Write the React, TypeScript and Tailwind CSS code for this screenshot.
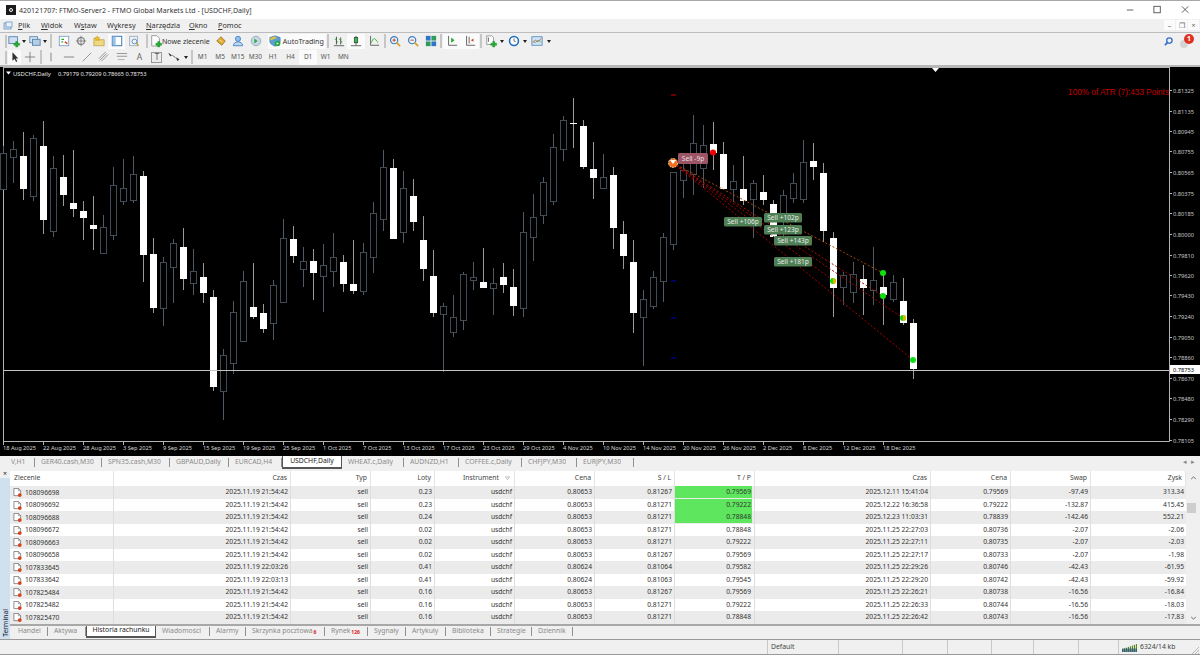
import type { ReactNode } from "react";

// x, wick top, body top, body bottom, wick bottom, white body?
type Candle = [number, number, number, number, number, boolean];

const CANDLES: Candle[] = [
  [4, 146, 153, 189, 189, false], [14, 141, 149, 157, 183, false], [24, 132, 156, 189, 200, true],
  [34, 135, 138, 196, 201, false], [44, 121, 146, 220, 234, true], [54, 156, 168, 231, 237, false],
  [64, 155, 177, 195, 206, true], [74, 150, 203, 209, 217, true], [84, 201, 211, 218, 240, true],
  [94, 196, 225, 229, 250, true], [104, 215, 227, 253, 253, false], [114, 167, 185, 235, 240, false],
  [124, 159, 188, 201, 205, false], [134, 156, 174, 200, 203, false], [144, 171, 176, 255, 282, true],
  [154, 238, 254, 308, 313, true], [164, 257, 262, 308, 326, false], [174, 239, 243, 267, 303, false],
  [184, 228, 247, 279, 290, true], [194, 249, 271, 283, 295, false], [204, 263, 277, 293, 303, true],
  [214, 290, 297, 387, 391, true], [224, 349, 355, 391, 420, false], [234, 301, 312, 363, 374, false],
  [244, 271, 281, 341, 342, false], [254, 263, 307, 317, 319, true], [264, 304, 313, 329, 333, true],
  [274, 280, 285, 323, 340, false], [284, 219, 238, 302, 302, false], [294, 226, 239, 256, 263, true],
  [304, 247, 261, 269, 287, false], [314, 249, 261, 273, 300, true], [324, 244, 265, 276, 312, false],
  [334, 233, 257, 271, 287, false], [344, 255, 262, 284, 292, true], [354, 240, 284, 291, 294, true],
  [364, 243, 252, 291, 295, false], [374, 202, 213, 257, 273, false], [384, 150, 167, 219, 231, false],
  [394, 159, 168, 239, 239, true], [404, 171, 188, 232, 243, false], [414, 179, 196, 222, 231, true],
  [424, 216, 240, 269, 281, true], [434, 250, 276, 313, 317, true], [444, 303, 306, 314, 372, false],
  [454, 295, 317, 332, 337, false], [464, 272, 274, 320, 330, false], [474, 262, 277, 280, 290, false],
  [484, 248, 282, 288, 288, true], [494, 268, 283, 288, 315, false], [504, 263, 277, 285, 293, true],
  [514, 269, 287, 306, 316, true], [524, 212, 232, 308, 317, false], [534, 194, 217, 237, 261, false],
  [544, 177, 182, 215, 224, false], [554, 134, 147, 201, 205, false], [564, 116, 120, 149, 161, false],
  [574, 98, 123, 124, 148, true], [584, 120, 126, 167, 169, true], [594, 142, 169, 178, 199, true],
  [604, 154, 177, 188, 188, false], [614, 167, 175, 228, 249, true], [624, 221, 234, 256, 269, true],
  [634, 240, 262, 313, 333, true], [644, 290, 299, 317, 366, false], [654, 271, 277, 306, 309, false],
  [664, 233, 237, 281, 302, false], [674, 172, 172, 244, 250, false], [684, 163, 170, 180, 198, false],
  [694, 115, 143, 174, 195, false], [704, 125, 145, 168, 188, false], [714, 122, 144, 153, 170, true],
  [724, 142, 154, 189, 189, true], [734, 165, 181, 189, 202, false], [744, 156, 189, 201, 205, true],
  [754, 180, 183, 199, 238, false], [764, 175, 192, 200, 205, true], [774, 200, 204, 237, 237, true],
  [784, 190, 195, 218, 236, false], [794, 173, 183, 198, 203, false], [804, 140, 162, 199, 203, false],
  [814, 143, 161, 167, 180, true], [824, 163, 173, 231, 242, true], [834, 232, 238, 288, 317, true],
  [844, 272, 275, 287, 305, false], [854, 262, 274, 292, 303, false], [864, 265, 279, 288, 315, true],
  [874, 247, 280, 290, 305, false], [884, 273, 287, 295, 325, true], [894, 275, 282, 299, 302, false],
  [904, 278, 301, 323, 325, true], [914, 319, 323, 369, 379, true],
];

const PRICES: [string, number][] = [
  ["0.81325", 90], ["0.81135", 111], ["0.80945", 131], ["0.80755", 151], ["0.80565", 172],
  ["0.80375", 193], ["0.80185", 213], ["0.80000", 234], ["0.79810", 255], ["0.79620", 275],
  ["0.79430", 295], ["0.79240", 316], ["0.79050", 337], ["0.78860", 357], ["0.78670", 378],
  ["0.78480", 398], ["0.78290", 419], ["0.78105", 440],
];

const DATES = [
  "18 Aug 2025", "22 Aug 2025", "28 Aug 2025", "3 Sep 2025", "9 Sep 2025", "15 Sep 2025",
  "19 Sep 2025", "25 Sep 2025", "1 Oct 2025", "7 Oct 2025", "13 Oct 2025", "17 Oct 2025",
  "23 Oct 2025", "29 Oct 2025", "4 Nov 2025", "10 Nov 2025", "14 Nov 2025", "20 Nov 2025",
  "26 Nov 2025", "2 Dec 2025", "8 Dec 2025", "12 Dec 2025", "18 Dec 2025",
];

const SELL_LABELS: [string, number, number][] = [
  ["Sell +102p", 764, 213], ["Sell +106p", 724, 217], ["Sell +123p", 764, 225],
  ["Sell +143p", 774, 236], ["Sell +181p", 774, 257],
];

const TRADE_LINES: [number, number, string][] = [
  [883, 273, "#a84400"], [883, 296, "#a81000"], [834, 281, "#a80000"], [903, 318, "#a80000"], [913, 360, "#a80000"],
];

const CHART_TABS: [string, number][] = [
  ["V,H1", 30], ["GER40.cash,M30", 67], ["SPN35.cash,M30", 68], ["GBPAUD,Daily", 59], ["EURCAD,H4", 53],
];
const CHART_TABS_AFTER: [string, number][] = [
  ["WHEAT.c,Daily", 62], ["AUDNZD,H1", 55], ["COFFEE.c,Daily", 63], ["CHFJPY,M30", 55], ["EURJPY,M30", 57],
];

const TERMINAL_TABS_BEFORE: [string, number][] = [["Handel", 36], ["Aktywa", 38]];
const TERMINAL_TABS_AFTER: [string, number, string?][] = [
  ["Wiadomości", 54], ["Alarmy", 36], ["Skrzynka pocztowa", 79, "6"], ["Rynek", 43, "126"],
  ["Sygnały", 38], ["Artykuły", 40], ["Biblioteka", 45], ["Strategie", 41], ["Dziennik", 41],
];

const TIME_A = "2025.11.19 21:54:42";

const ROWS: string[][] = [
  ["108096698", TIME_A, "0.23", "0.80653", "0.81267", "0.79569", "2025.12.11 15:41:04", "0.79569", "-97.49", "313.34"],
  ["108096692", TIME_A, "0.23", "0.80653", "0.81271", "0.79222", "2025.12.22 16:36:58", "0.79222", "-132.87", "415.45"],
  ["108096688", TIME_A, "0.24", "0.80653", "0.81271", "0.78848", "2025.12.23 11:03:31", "0.78839", "-142.46", "552.21"],
  ["108096672", TIME_A, "0.02", "0.80653", "0.81271", "0.78848", "2025.11.25 22:27:03", "0.80736", "-2.07", "-2.06"],
  ["108096663", TIME_A, "0.02", "0.80653", "0.81271", "0.79222", "2025.11.25 22:27:11", "0.80735", "-2.07", "-2.03"],
  ["108096658", TIME_A, "0.02", "0.80653", "0.81267", "0.79569", "2025.11.25 22:27:17", "0.80733", "-2.07", "-1.98"],
  ["107833645", "2025.11.19 22:03:26", "0.41", "0.80624", "0.81064", "0.79582", "2025.11.25 22:29:26", "0.80746", "-42.43", "-61.95"],
  ["107833642", "2025.11.19 22:03:13", "0.41", "0.80624", "0.81063", "0.79545", "2025.11.25 22:29:20", "0.80742", "-42.43", "-59.92"],
  ["107825484", TIME_A, "0.16", "0.80653", "0.81267", "0.79569", "2025.11.25 22:26:21", "0.80738", "-16.56", "-16.84"],
  ["107825482", TIME_A, "0.16", "0.80653", "0.81271", "0.79222", "2025.11.25 22:26:33", "0.80744", "-16.56", "-18.03"],
  ["107825470", TIME_A, "0.16", "0.80653", "0.81271", "0.78848", "2025.11.25 22:26:42", "0.80743", "-16.56", "-17.83"],
];

const GRID = "grid grid-cols-[104px_177px_80px_64px_80px_80px_80px_80px_176px_80px_80px_95px]";

function Icon({ children }: { children: ReactNode }) {
  return <svg viewBox="0 0 14 14" className="size-[12px] overflow-visible">{children}</svg>;
}

function Arrow() {
  return <span className="size-0 border-x-[2.5px] border-t-[3px] border-x-transparent border-t-[#222]" />;
}

function Btn({ w = 17.6, active, children }: { w?: number; active?: boolean; children: ReactNode }) {
  return (
    <div
      className={`flex h-[15px] shrink-0 items-center justify-center ${active ? "bg-[#fbfbfb]" : ""}`}
      style={{ width: w }}
    >
      {children}
    </div>
  );
}

function Sep({ tight }: { tight?: boolean }) {
  return <div className={`h-[14px] w-[2px] shrink-0 bg-[#c6c6c6] ${tight ? "mx-px" : "mx-[3px]"}`} />;
}

function TfBtn({ label, active }: { label: string; active?: boolean }) {
  return (
    <Btn active={active}>
      <span className="text-[6.5px] text-[#555]">{label}</span>
    </Btn>
  );
}

const Plus = <path d="M9 7.5h2.4v2.2h2.2v2.4h-2.2v1.9H9v-1.9H6.8v-2.4H9z" fill="#1fae2e" stroke="#0d7a1c" strokeWidth=".4" />;
const Axes = <path d="M3 1v11h10" fill="none" stroke="#555" strokeWidth="1" />;
const Lens = (
  <>
    <circle cx="6" cy="6" r="4.2" fill="#eaf4fc" stroke="#3f7fbf" strokeWidth="1.4" />
    <path d="M9 9l4 4" stroke="#d8a32c" strokeWidth="2" />
  </>
);

function Chart() {
  return (
    <svg viewBox="0 67 1200 389" className="block h-[389px] w-[1200px] shrink-0 bg-black">
      <path d="M3.5 67v374.5H1169.5V67" fill="none" stroke="#b4b4b4" strokeWidth="1" />
      <path d="M3 67.5H1170" stroke="#b4b4b4" strokeWidth="1" />
      <path d="M932 68h7l-3.5 4z" fill="#fff" />
      <path d="M6 71.5h5l-2.500 3z" fill="#fff" />
      <text x="13" y="75.500" fill="#e8e8e8" fontSize="5.9">USDCHF,Daily</text>
      <text x="58" y="75.500" fill="#e8e8e8" fontSize="5.7">0.79179 0.79209 0.78665 0.78753</text>
      <text x="1169" y="95" textAnchor="end" fill="#c40000" fontSize="8.2" fontFamily="'Liberation Sans', sans-serif">100% of ATR (7):433 Points</text>

      {CANDLES.map(([x, top, bodyTop, bodyBottom, bottom, white]) => (
        <g key={x}>
          <path d={`M${x - 0.5} ${top}V${bottom}`} stroke={white ? "#9a9a9a" : "#505a64"} strokeWidth="1" />
          {white
            ? <rect x={x - 4} y={bodyTop} width="7" height={Math.max(bodyBottom - bodyTop, 1)} fill="#fff" />
            : <rect x={x - 3.5} y={bodyTop + 0.5} width="6" height={bodyBottom - bodyTop} fill="#000" stroke="#414b56" strokeWidth="1" />}
        </g>
      ))}

      <path d="M3 370.5H1169" stroke="#c4c4c4" strokeWidth="1" />
      <path d="M671 95h5" stroke="#d00000" strokeWidth="1" />
      <path d="M671 281h5M671 318h5M671 358h5" stroke="#0000c0" strokeWidth="1" />

      {TRADE_LINES.map(([x, y, color]) => (
        <path key={`${x}-${y}`} d={`M673 163L${x} ${y}`} stroke={color} strokeWidth="1" strokeDasharray="2 2" />
      ))}

      <circle cx="673" cy="163" r="4.5" fill="#f0701c" stroke="#f0c8a0" strokeWidth="1" strokeDasharray="2 1" />
      <path d="M670 160h6l-3 4z" fill="#fff" />
      <circle cx="713" cy="152.5" r="3" fill="#f00000" />
      <circle cx="883" cy="273" r="3" fill="#10e010" />
      <circle cx="883" cy="296" r="3" fill="#10e010" />
      <circle cx="913" cy="360" r="3" fill="#10e010" />
      <circle cx="833" cy="281" r="3" fill="#10e010" />
      <path d="M833 278a3 3 0 0 1 0 6z" fill="#f0b000" />
      <circle cx="903" cy="318" r="3" fill="#10e010" />
      <path d="M903 315a3 3 0 0 1 0 6z" fill="#f0b000" />

      <rect x="678" y="153" width="30" height="11" rx="1.5" fill="#9c5564" />
      <text x="693" y="161" textAnchor="middle" fill="#eadfe0" fontSize="6.6">Sell -9p</text>
      {SELL_LABELS.map(([label, x, y]) => (
        <g key={label}>
          <rect x={x} y={y} width="38" height="9.5" rx="1.5" fill="#4f7f55" />
          <text x={x + 19} y={y + 7.3} textAnchor="middle" fill="#e6ece6" fontSize="6.6">{label}</text>
        </g>
      ))}

      {PRICES.map(([label, y]) => (
        <g key={label}>
          <path d={`M1169 ${y}.5h3`} stroke="#b4b4b4" strokeWidth="1" />
          <text x="1173" y={y + 2.5} fill="#c8c8c8" fontSize="5.7">{label}</text>
        </g>
      ))}
      <rect x="1170" y="365" width="30" height="9" fill="#fff" />
      <text x="1173" y="372" fill="#000" fontSize="5.7">0.78753</text>

      {DATES.map((label, index) => (
        <g key={label}>
          <path d={`M${3.5 + index * 40} 441v4`} stroke="#b4b4b4" strokeWidth="1" />
          <text x={3 + index * 40} y="450" fill="#d4d4d4" fontSize="5.7">{label}</text>
        </g>
      ))}
    </svg>
  );
}

function TabText({ label, width }: { label: string; width: number }) {
  return (
    <div className="flex h-[12px] shrink-0 items-center justify-between pl-[6px]" style={{ width }}>
      <span className="truncate text-[6.8px] text-[#8a8a8a]">{label}</span>
      <span className="h-[9px] w-px bg-[#909090]" />
    </div>
  );
}

function OrderIcon() {
  return (
    <svg viewBox="0 0 10 10" className="size-[9px] shrink-0">
      <path d="M1 .5h5l2.5 2.5v5.5H1z" fill="#fff" stroke="#666" strokeWidth=".8" />
      <path d="M6 .5v2.5h2.5" fill="none" stroke="#666" strokeWidth=".6" />
      <circle cx="7.5" cy="7.8" r="2.1" fill="#d9401a" />
    </svg>
  );
}

function Table() {
  const head = ["Czas", "Typ", "Loty"];
  const headTail = ["Cena", "S / L", "T / P", "Czas", "Cena", "Swap", "Zysk"];
  return (
    <div className="w-[1176px] shrink-0 pt-[2px]">
      <div className={`${GRID} h-[15px] bg-white text-[6.8px] text-[#444]`}>
        <div className="flex items-center border-r border-[#e4e4e4] pl-[4px]">Zlecenie</div>
        {head.map(label => (
          <div key={label} className="flex items-center justify-end border-r border-[#e4e4e4] pr-[3px]">{label}</div>
        ))}
        <div className="flex items-center justify-end gap-[6px] border-r border-[#e4e4e4] pr-[4px]">
          Instrument
          <svg viewBox="0 0 6 6" className="size-[5px]"><path d="M.5 1h5L3 4.5z" fill="none" stroke="#888" strokeWidth=".6" /></svg>
        </div>
        {headTail.map((label, index) => (
          <div key={`${label}-${index}`} className="flex items-center justify-end border-r border-[#e4e4e4] pr-[3px]">{label}</div>
        ))}
      </div>
      {ROWS.map((row, rowIndex) => {
        const [id, time, lots, price, sl, tp, closeTime, closePrice, swap, profit] = row;
        const cells = [time, "sell", lots, "usdchf", price, sl];
        const tail = [closeTime, closePrice, swap, profit];
        return (
          <div
            key={id}
            className={`${GRID} h-[12.5px] text-[6.7px] leading-[12px] text-[#333] ${rowIndex % 2 === 0 ? "bg-[#ebebeb]" : "bg-white"}`}
          >
            <div className="flex items-center gap-[3px] border-r border-[#dedede] pl-[3px]">
              <OrderIcon />
              {id}
            </div>
            {cells.map((value, index) => (
              <div key={index} className="border-r border-[#dedede] pr-[2px] text-right">{value}</div>
            ))}
            <div className="border-r border-[#dedede] pb-px pr-[2px]">
              <div className={`pr-px text-right ${rowIndex < 3 ? "bg-[#5ee65e]" : ""}`}>{tp}</div>
            </div>
            {tail.map((value, index) => (
              <div key={index} className={`pr-[2px] text-right ${index < 3 ? "border-r border-[#dedede]" : ""}`}>{value}</div>
            ))}
          </div>
        );
      })}
    </div>
  );
}

function Scrollbar() {
  return (
    <div className="flex w-[14px] shrink-0 flex-col items-center bg-[#f0f0f0]">
      <svg viewBox="0 0 8 5" className="mt-[7px] h-[4px] w-[7px]"><path d="M1 4l3-3 3 3" fill="none" stroke="#555" strokeWidth="1" /></svg>
      <div className="ml-[-3px] mt-[23px] h-[10px] w-[9px] bg-[#cdcdcd]" />
      <svg viewBox="0 0 8 5" className="mt-auto mb-[4px] h-[4px] w-[7px]"><path d="M1 1l3 3 3-3" fill="none" stroke="#555" strokeWidth="1" /></svg>
    </div>
  );
}

function Terminal() {
  return (
    <div className="flex h-[170px] shrink-0">
      <div className="flex w-[10px] shrink-0 flex-col items-center bg-[#cfe0ef]">
        <div className="flex h-[9px] w-full items-center justify-center bg-[#f0f0f0] text-[7px] leading-none text-[#222]">×</div>
        <span className="mt-auto mb-[2px] rotate-180 text-[6.8px] leading-[9px] text-[#223] [writing-mode:vertical-rl]">Terminal</span>
      </div>
      <div className="flex min-w-0 flex-1 flex-col">
        <div className="flex h-[156.5px] shrink-0 border-b-2 border-[#a8a8a8]">
          <Table />
          <Scrollbar />
        </div>
        <div className="flex h-[13.5px] items-start pl-[2px]">
          {TERMINAL_TABS_BEFORE.map(([label, width]) => (
            <div key={label} className="flex h-[11px] items-center justify-between pl-[6px]" style={{ width }}>
              <span className="text-[6.8px] text-[#8a8a8a]">{label}</span>
              <span className="h-[9px] w-px bg-[#909090]" />
            </div>
          ))}
          <div className="flex h-[12px] w-[70px] shrink-0 items-center justify-center border-x border-b-2 border-[#555] bg-white text-[6.8px] text-[#222]">
            Historia rachunku
          </div>
          {TERMINAL_TABS_AFTER.map(([label, width, badge]) => (
            <div key={label} className="flex h-[11px] shrink-0 items-center justify-between pl-[6px]" style={{ width }}>
              <span className="text-[6.8px] text-[#8a8a8a]">
                {label}
                {badge ? <sub className="ml-px text-[5px] font-bold text-[#e02020]">{badge}</sub> : null}
              </span>
              <span className="h-[9px] w-px bg-[#909090]" />
            </div>
          ))}
        </div>
      </div>
    </div>
  );
}

function StatusBar() {
  const cellWidths = [71, 64, 45, 44, 42, 45, 40];
  return (
    <div className="flex h-[16px] shrink-0 items-center border-y border-[#9a9a9a] bg-[#f0f0f0] pl-[767px] text-[6.8px] text-[#444]">
      {cellWidths.map((width, index) => (
        <div key={width + index} className="flex h-full shrink-0 items-center border-l border-[#c8c8c8] pl-[3px]" style={{ width }}>
          {index === 0 ? "Default" : ""}
        </div>
      ))}
      <div className="flex h-full items-center gap-[3px] border-l border-[#c8c8c8] pl-[3px]">
        <svg viewBox="0 0 15 9" className="h-[9px] w-[15px]">
          {[0, 2, 4, 6, 8, 10, 12, 14].map((x, index) => (
            <path key={x} d={`M${x + 0.5} 9V${6 - index * 0.7}`} stroke="#5b8a28" strokeWidth="1.2" />
          ))}
          <path d="M0 9V5.5h15V9z" fill="#1d4f7a" opacity=".6" />
        </svg>
        6324/14 kb
      </div>
      <svg viewBox="0 0 8 8" className="ml-auto mt-[6px] mr-px size-[8px]">
        <path d="M1 8l7-7M4 8l4-4M7 8l1-1" stroke="#aaa" strokeWidth=".8" />
      </svg>
    </div>
  );
}

export default function App() {
  return (
    <div className="flex h-[655px] w-[1200px] flex-col overflow-hidden bg-[#f0f0f0] text-[#222] [font-family:'Noto_Sans',sans-serif]">
      {/* title bar */}
      <div className="flex h-[19px] shrink-0 items-center border-t border-[#a8a8a8] bg-white pl-[6px]">
        <div className="flex size-[10px] items-center justify-center bg-[#1b1b1b]">
          <div className="size-[4px] rounded-full border border-white" />
        </div>
        <span className="ml-[3px] text-[7.05px] text-[#333]">420121707: FTMO-Server2 - FTMO Global Markets Ltd - [USDCHF,Daily]</span>
        <svg viewBox="-2 0 72 10" className="ml-auto mr-[9px] h-[10px] w-[66px]">
          <path d="M0 5h7" stroke="#555" strokeWidth="1" />
          <rect x="29.5" y="1" width="7" height="7" fill="none" stroke="#555" strokeWidth="1" />
          <path d="M60 1l7 7M67 1l-7 7" stroke="#555" strokeWidth="1" />
        </svg>
      </div>

      {/* menu */}
      <div className="flex h-[14px] shrink-0 items-center border-b border-[#bcbcbc] text-[7.3px] text-[#333]">
        <svg viewBox="0 0 10 10" className="ml-[3px] size-[10px]">
          <rect x="1" y="2" width="7" height="6" fill="#cfe0f2" stroke="#6f98c4" strokeWidth=".8" />
          <rect x="3" y="1" width="6" height="5" fill="#e8f0f8" stroke="#6f98c4" strokeWidth=".8" />
        </svg>
        <span className="ml-[5px] w-[23px]"><u>P</u>lik</span>
        <span className="w-[33px]"><u>W</u>idok</span>
        <span className="w-[33px]">W<u>s</u>taw</span>
        <span className="w-[39px]">W<u>y</u>kresy</span>
        <span className="w-[43px]"><u>N</u>arzędzia</span>
        <span className="w-[29px]"><u>O</u>kno</span>
        <span><u>P</u>omoc</span>
        <div className="ml-auto mb-[1px] flex gap-px pr-[1px] text-[#666]">
          {["–", "❐", "×"].map(glyph => (
            <span key={glyph} className="flex h-[10px] w-[11px] items-center justify-center bg-[#fbfbfb] text-[7px] leading-none">{glyph}</span>
          ))}
        </div>
      </div>

      {/* main toolbar */}
      <div className="flex h-[16px] shrink-0 items-center pl-[5px]">
        <div className="mr-[1px] h-[13px] w-[2px] bg-[#c6c6c6]" />
        <Btn w={11}><Icon><rect x="1" y="2" width="10" height="8" fill="#cfe0f2" stroke="#4f7fb0" />{Plus}</Icon></Btn>
        <Btn w={9}><Arrow /></Btn>
        <Btn w={14}><Icon><rect x="1" y="2" width="9" height="7" fill="#dbe7f3" stroke="#4f7fb0" /><rect x="4" y="5" width="9" height="7" fill="#b6cde4" stroke="#4f7fb0" /></Icon></Btn>
        <Btn w={5}><Arrow /></Btn>
        <Sep />
        <Btn><Icon><rect x="1.5" y="1.5" width="11" height="11" fill="#fff" stroke="#7a9cc0" /><path d="M4 5h3M4 8h2" stroke="#1fae2e" strokeWidth="1.4" /><path d="M8 8l3 2" stroke="#d9401a" strokeWidth="1.6" /></Icon></Btn>
        <Btn><Icon><circle cx="7" cy="7" r="4" fill="none" stroke="#777" strokeWidth="1.2" /><path d="M7 1v12M1 7h12" stroke="#777" strokeWidth="1" /></Icon></Btn>
        <Btn><Icon><path d="M1 4h5l1 1.5h6v7H1z" fill="#f0d880" stroke="#b59a3c" strokeWidth=".8" /><path d="M5 1l1 2 2 .3-1.5 1.400.4 2L5 5.700 3.100 6.700l.4-2L2 3.300 4 3z" fill="#f5c21c" stroke="#b58a10" strokeWidth=".5" /></Icon></Btn>
        <Btn active><Icon><rect x="1.5" y="1.5" width="11" height="11" fill="#fff" stroke="#3f7fbf" strokeWidth="1.2" /><rect x="2" y="2" width="3.5" height="10" fill="#9cc2e6" /></Icon></Btn>
        <Btn><Icon><rect x="2" y="1.5" width="9" height="11" fill="#eef3f8" stroke="#9aa8b8" /><circle cx="7.5" cy="7.5" r="2.8" fill="none" stroke="#4f85b8" /><path d="M9.5 9.5l3 3" stroke="#c99a2e" strokeWidth="1.4" /></Icon></Btn>
        <Sep />
        <Btn w={10}><Icon><path d="M2 .8h6l3 3v9H2z" fill="#fff" stroke="#777" strokeWidth=".8" />{Plus}</Icon></Btn>
        <span className="w-[51px] shrink-0 whitespace-nowrap pl-[1px] text-[7.1px] text-[#333]">Nowe zlecenie</span>
        <Btn><Icon><path d="M2 7l5-5 5 5-4 5z" fill="#e0a830" stroke="#8a6414" strokeWidth=".8" /><path d="M5 5.5l4 3" stroke="#fff2c0" strokeWidth="1" /></Icon></Btn>
        <Btn><Icon><circle cx="7" cy="4.5" r="3" fill="#8fc0ee" stroke="#3f7fbf" /><path d="M1.5 12.5c.5-3 2.5-4.5 5.5-4.5s5 1.5 5.5 4.5z" fill="#bcd8f2" stroke="#3f7fbf" /></Icon></Btn>
        <Btn><Icon><circle cx="7" cy="7" r="5.5" fill="#c8d8e4" stroke="#8ea4b8" /><path d="M5 4l4 3-4 3z" fill="#2fa84a" /></Icon></Btn>
        <div className="ml-[3px] flex h-[15px] w-[58px] shrink-0 items-center gap-[2px] bg-[#fbfbfb] pl-[1px] text-[7.1px] text-[#333]">
          <Icon><path d="M1 3l6-2 6 2v5c0 2-3 4-6 5-3-1-6-3-6-5z" fill="#5a9fd6" stroke="#2a6ca6" strokeWidth=".7" /><path d="M1.5 3.5l5.5-2 2 2-7.5 3z" fill="#e8c33a" /><circle cx="10" cy="10" r="3.2" fill="#22a838" /><path d="M9 8.5l2.5 1.5L9 11.500z" fill="#fff" /></Icon>
          AutoTrading
        </div>
        <Sep tight />
        <Btn><Icon><path d="M4 2v9M9 3v8" stroke="#444" strokeWidth="1.1" /><path d="M2 5h2M4 8h2M7 5h2M9 8h2" stroke="#1fae2e" strokeWidth="1" /><path d="M1 12.5h12" stroke="#555" /></Icon></Btn>
        <Btn active><Icon><path d="M7 1v11" stroke="#444" /><rect x="5" y="3" width="4" height="6" fill="#2fc04a" stroke="#333" strokeWidth=".8" /><path d="M1 12.5h12" stroke="#555" /></Icon></Btn>
        <Btn><Icon>{Axes}<path d="M4 9c2-6 4-6 6-2l2 2" fill="none" stroke="#1fae2e" strokeWidth="1" /></Icon></Btn>
        <Sep tight />
        <Btn><Icon>{Lens}<path d="M4 6h4M6 4v4" stroke="#c03020" strokeWidth="1" /></Icon></Btn>
        <Btn><Icon>{Lens}<path d="M4 6h4" stroke="#c03020" strokeWidth="1" /></Icon></Btn>
        <Btn><Icon><rect x="1" y="1" width="5.5" height="5.5" fill="#2f74c8" /><rect x="7.5" y="1" width="5.5" height="5.5" fill="#2f9c5a" /><rect x="1" y="7.5" width="5.5" height="5.5" fill="#2f9c5a" /><rect x="7.5" y="7.5" width="5.5" height="5.5" fill="#2f74c8" /></Icon></Btn>
        <Sep tight />
        <Btn active><Icon>{Axes}<path d="M6 3v6l4-3z" fill="#1fae2e" /></Icon></Btn>
        <Btn active><Icon>{Axes}<path d="M6 2v8" stroke="#555" /><path d="M8 6l3-2v4z" fill="#d04020" /></Icon></Btn>
        <Sep tight />
        <Btn w={16}><Icon><path d="M2 1h6l2 2v8H2z" fill="#fff" stroke="#777" strokeWidth=".8" /><path d="M4 3v5" stroke="#555" />{Plus}</Icon></Btn>
        <Btn w={6}><Arrow /></Btn>
        <Btn w={18}><Icon><circle cx="7" cy="7" r="5.2" fill="#fff" stroke="#1a6cc0" strokeWidth="1.8" /><path d="M7 4v3l2 1" fill="none" stroke="#333" strokeWidth=".8" /></Icon></Btn>
        <Btn w={4}><Arrow /></Btn>
        <Btn w={20}><Icon><rect x="1" y="2" width="12" height="10" fill="#cfe4f6" stroke="#5a8cbc" /><path d="M2 9l3-3 3 2 4-4" fill="none" stroke="#d04020" strokeWidth=".9" /><path d="M2 7l3 2 3-3 4 2" fill="none" stroke="#3aa048" strokeWidth=".7" /></Icon></Btn>
        <Btn w={4}><Arrow /></Btn>
        <div className="ml-auto flex items-center gap-[7px] pr-[6px]">
          <svg viewBox="0 0 10 10" className="size-[9px]"><circle cx="6" cy="4" r="3" fill="none" stroke="#2f6cc8" strokeWidth="1.4" /><path d="M4 6L1 9" stroke="#2f6cc8" strokeWidth="1.8" /></svg>
          <div className="relative h-[14px] w-[14px]">
            <div className="absolute bottom-0 left-0 size-[8px] rounded-full bg-[#d4d4d4]" />
            <div className="absolute right-0 top-0 flex size-[10px] items-center justify-center rounded-full bg-[#e03020] text-[7.5px] font-bold leading-none text-white">1</div>
          </div>
        </div>
      </div>

      {/* drawing and timeframe toolbar */}
      <div className="flex h-[16px] shrink-0 items-center pl-[5px]">
        <div className="mr-[1px] h-[13px] w-[2px] bg-[#c6c6c6]" />
        <Btn w={13} active><Icon><path d="M4 1.5v10l2.5-2.200 1.800 3.500 1.400-.7-1.800-3.400h3z" fill="#333" /></Icon></Btn>
        <Btn><Icon><path d="M7 1v12M1 7h12" stroke="#777" strokeWidth="1" /></Icon></Btn>
        <Sep tight />
        <Btn><Icon><path d="M7 2v10" stroke="#888" strokeWidth="1.2" /></Icon></Btn>
        <Btn><Icon><path d="M1 7h12" stroke="#888" strokeWidth="1.2" /></Icon></Btn>
        <Btn><Icon><path d="M2 12L12 2" stroke="#888" strokeWidth="1" /></Icon></Btn>
        <Btn><Icon><path d="M1 9l8-8M4 12l8-8M2 11l8-8" stroke="#888" strokeWidth="1" /></Icon></Btn>
        <Btn><Icon><path d="M1 3h12M1 6h12" stroke="#999" strokeWidth="1.2" /><path d="M2 10h8" stroke="#aaa" strokeWidth="1" /></Icon></Btn>
        <Btn><span className="text-[8.5px] leading-none text-[#666]">A</span></Btn>
        <Btn><div className="flex size-[11px] items-center justify-center border border-[#999] bg-[#eee] text-[8px] leading-none text-[#555]">T</div></Btn>
        <Btn w={16}><Icon><path d="M1 3l3 2-1 1zM10 8l3 2-2 1zM5 5l4 3" fill="#333" stroke="#333" strokeWidth=".8" /></Icon></Btn>
        <Btn w={8}><Arrow /></Btn>
        <Sep tight />
        <TfBtn label="M1" />
        <TfBtn label="M5" />
        <TfBtn label="M15" />
        <TfBtn label="M30" />
        <TfBtn label="H1" />
        <TfBtn label="H4" />
        <TfBtn label="D1" active />
        <TfBtn label="W1" />
        <TfBtn label="MN" />
      </div>

      <div className="h-[2px] shrink-0 bg-[#b8b8b8]" />

      <Chart />

      {/* open chart tabs */}
      <div className="flex h-[13px] shrink-0 items-center pl-[5px]">
        {CHART_TABS.map(([label, width]) => <TabText key={label} label={label} width={width} />)}
        <div className="flex h-[13px] w-[60px] shrink-0 items-center justify-center border-x border-b-2 border-[#555] bg-white text-[6.8px] text-[#222]">
          USDCHF,Daily
        </div>
        {CHART_TABS_AFTER.map(([label, width]) => <TabText key={label} label={label} width={width} />)}
        <span className="ml-auto mr-[5px] text-[7px] text-[#888]">◂ &nbsp;▸</span>
      </div>

      <Terminal />
      <StatusBar />
    </div>
  );
}
